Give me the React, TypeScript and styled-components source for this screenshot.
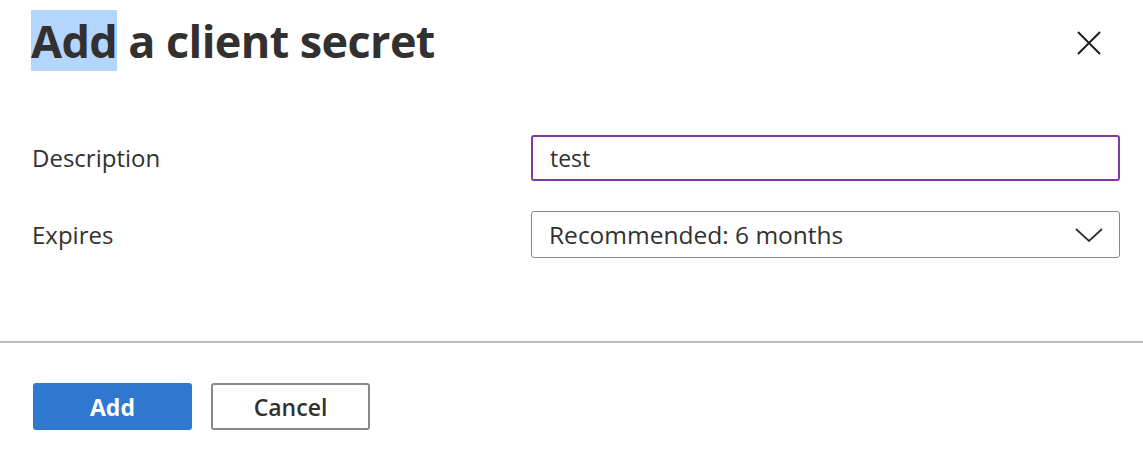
import * as React from 'react';
import styled, { createGlobalStyle } from 'styled-components';

const GlobalStyle = createGlobalStyle`
  html, body {
    margin: 0;
    padding: 0;
    background: #ffffff;
  }
  body {
    font-family: 'Open Sans', 'Noto Sans', sans-serif;
    color: #323130;
  }
`;

export default function App() {
  return (
    <Panel>
      <GlobalStyle />
      <Header>
        <Title>
          <Selected>Add</Selected> a client secret
        </Title>
        <CloseButton aria-label="Close">
          <svg width="24" height="24" viewBox="0 0 24 24">
            <path d="M1 1 L23 23 M23 1 L1 23" stroke="#201f1e" strokeWidth="2" fill="none" />
          </svg>
        </CloseButton>
      </Header>

      <Form>
        <Label>Description</Label>
        <TextInput defaultValue="test" />
        <Label>Expires</Label>
        <Select>
          <span>Recommended: 6 months</span>
          <svg width="28" height="14" viewBox="0 0 28 14">
            <path d="M1 1 L14 13 L27 1" stroke="#323130" strokeWidth="1.8" fill="none" />
          </svg>
        </Select>
      </Form>

      <Divider />

      <Footer>
        <Button primary>Add</Button>
        <Button>Cancel</Button>
      </Footer>
    </Panel>
  );
}

const Panel = styled.div`
  width: 1143px;
  height: 459px;
  background: #ffffff;
  display: flex;
  flex-direction: column;
`;

const Header = styled.div`
  display: flex;
  justify-content: space-between;
  align-items: flex-start;
  padding: 11px 42px 0 31px;
`;

const Title = styled.h1`
  margin: 0;
  font-size: 45px;
  line-height: 60px;
  font-weight: 700;
  letter-spacing: -0.6px;
  color: #323130;
`;

const Selected = styled.span`
  background: #b4d5fe;
`;

const CloseButton = styled.button`
  margin-top: 20px;
  padding: 0;
  border: none;
  background: none;
  width: 24px;
  height: 24px;
  display: flex;
`;

const Form = styled.div`
  display: grid;
  grid-template-columns: 499px 589px;
  grid-auto-rows: 47px;
  row-gap: 30px;
  align-items: center;
  padding: 63px 0 0 32px;
`;

const Label = styled.div`
  font-size: 24px;
  color: #323130;
`;

const TextInput = styled.input`
  box-sizing: border-box;
  width: 100%;
  height: 46px;
  border: 2px solid #7e3aa6;
  border-radius: 3px;
  padding: 0 17px;
  font-family: inherit;
  font-size: 23px;
  color: #323130;
  outline: none;
`;

const Select = styled.div`
  box-sizing: border-box;
  height: 47px;
  border: 1.5px solid #8a8886;
  border-radius: 3px;
  padding: 0 16px 0 17px;
  display: flex;
  align-items: center;
  justify-content: space-between;
  font-size: 24.5px;
  color: #323130;
`;

const Divider = styled.div`
  margin-top: 83px;
  height: 2px;
  background: #bcbcbc;
`;

const Footer = styled.div`
  display: flex;
  gap: 19px;
  padding: 40px 0 0 33px;
`;

const Button = styled.button<{ primary?: boolean }>`
  box-sizing: border-box;
  width: 159px;
  height: 47px;
  border-radius: 3px;
  font-family: inherit;
  font-size: 23px;
  font-weight: ${(p) => (p.primary ? 700 : 600)};
  color: ${(p) => (p.primary ? '#ffffff' : '#323130')};
  background: ${(p) => (p.primary ? '#2f78cf' : '#ffffff')};
  border: ${(p) => (p.primary ? 'none' : '2px solid #8a8886')};
  padding: 0;
`;
